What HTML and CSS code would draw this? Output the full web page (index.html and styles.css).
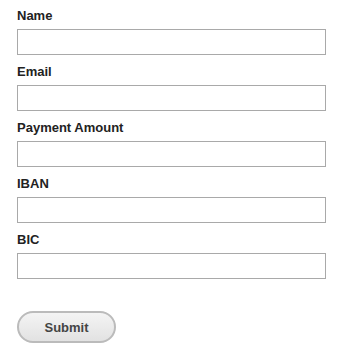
FILE: index.html
```html
<!DOCTYPE html>
<html lang="en">
<head>
  <meta charset="UTF-8">
  <title>Payment Form</title>
  <link rel="stylesheet" href="styles.css">
</head>
<body>

  <!-- Payment Form -->
  <form class="pay-form">
    <div class="field">
      <label for="name">Name</label>
      <input type="text" id="name">
    </div>
    <div class="field">
      <label for="email">Email</label>
      <input type="text" id="email">
    </div>
    <div class="field">
      <label for="amount">Payment Amount</label>
      <input type="text" id="amount">
    </div>
    <div class="field">
      <label for="iban">IBAN</label>
      <input type="text" id="iban">
    </div>
    <div class="field">
      <label for="bic">BIC</label>
      <input type="text" id="bic">
    </div>
    <button type="button" class="submit-btn">Submit</button>
  </form>

</body>
</html>
```

FILE: styles.css
```css
body {
  font-family: "Liberation Sans", Arial, sans-serif;
  margin: 0;
  padding: 0;
  background: #fff;
}

.pay-form {
  padding: 8px 0 0 17px;
  width: 309px;
}

.field {
  margin-bottom: 9px;
}

.field label {
  display: block;
  font-size: 13px;
  font-weight: bold;
  line-height: 16px;
  color: #222;
  margin-bottom: 5px;
}

.field input {
  display: block;
  box-sizing: border-box;
  width: 309px;
  height: 26px;
  margin: 0;
  border: 1px solid #a9a9a9;
  background: #fff;
  padding: 2px 4px;
  font-size: 13px;
}

.submit-btn {
  box-sizing: border-box;
  margin-top: 23px;
  width: 99px;
  height: 32px;
  border: 2px solid #bbb;
  border-radius: 16px;
  background: linear-gradient(#f4f4f4, #e2e2e2);
  font-family: "Liberation Sans", Arial, sans-serif;
  font-size: 13px;
  font-weight: bold;
  color: #444;
  cursor: pointer;
}
```
